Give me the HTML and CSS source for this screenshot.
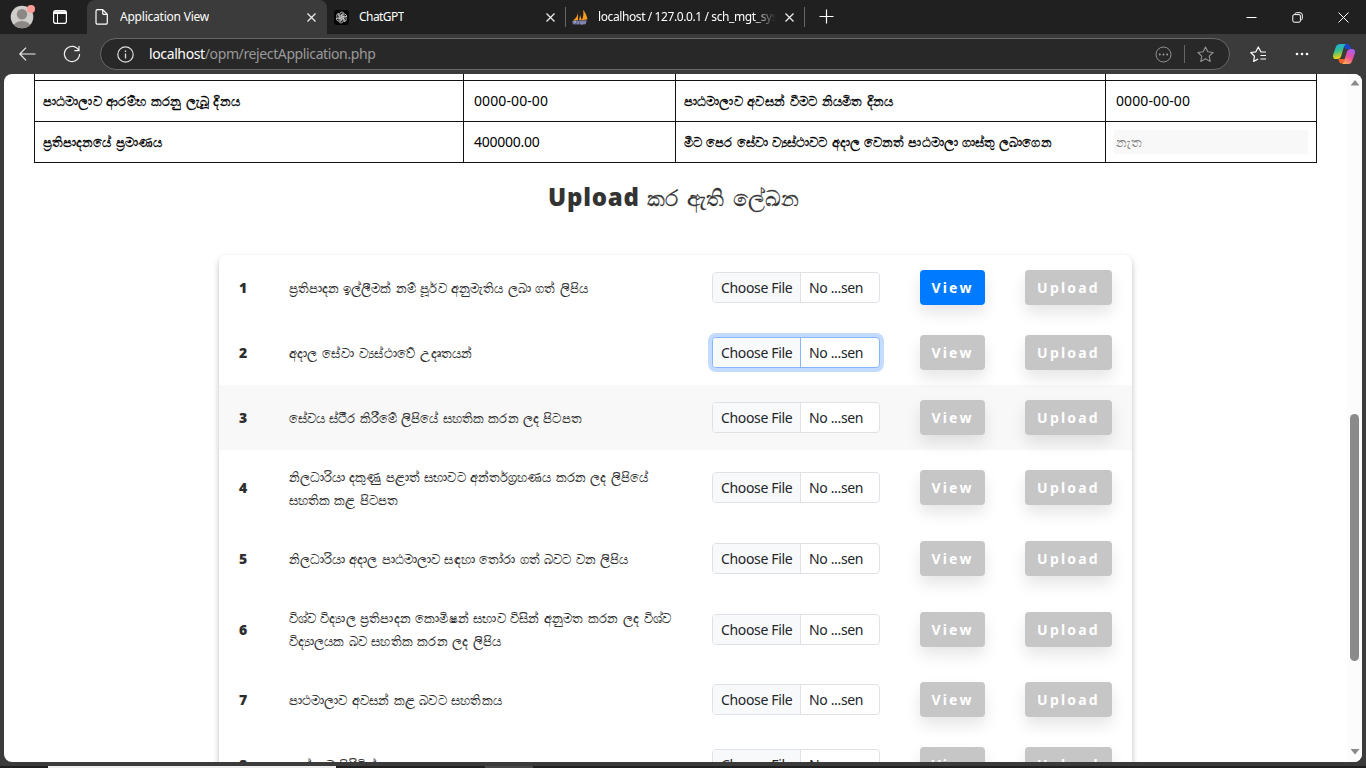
FILE: index.html
```html
<!DOCTYPE html>
<html lang="si">
<head>
<meta charset="utf-8">
<title>Application View</title>
<link rel="stylesheet" href="styles.css">
</head>
<body>
<div class="browser">
  <header class="tabs">
    <div class="profile">
      <svg width="26" height="26" viewBox="0 0 26 26"><defs><clipPath id="face"><circle cx="12" cy="14" r="11.3"/></clipPath></defs><circle cx="12" cy="14" r="11.3" fill="#cfcdca"/><g clip-path="url(#face)" fill="#8b8886"><circle cx="12" cy="11.3" r="5.2"/><ellipse cx="12" cy="24" rx="8.7" ry="6"/></g><circle cx="21" cy="6" r="4" fill="#ff9d98"/></svg>
      <svg width="14" height="14" viewBox="0 0 14 14" fill="none" stroke="#fff"><rect x=".6" y=".6" width="12.8" height="12.8" rx="2.2" stroke-width="1.2"/><path d="M1 2h12M1 3.2h12" stroke-width="1.6"/><path d="M4.5 4v9.5"/></svg>
    </div>
    <div class="tab active">
      <svg class="page-icon" width="14" height="16" viewBox="0 0 14 16" fill="none" stroke="#fff" stroke-width="1.2"><path d="M2.5.7h5.2l4.6 4.6v8.4a1.5 1.5 0 0 1-1.5 1.5H2.500A1.500 1.500 0 0 1 1 13.700V2.200A1.500 1.500 0 0 1 2.500.7zM7.700.9v3.300a1.200 1.200 0 0 0 1.200 1.200h3.300"/></svg>
      <span class="tab-title t1">Application View</span>
      <svg class="close" width="9" height="9" viewBox="0 0 9 9"><path d="M.5.5l8 8M8.500.5l-8 8"/></svg>
    </div>
    <div class="tab second">
      <svg width="15" height="15" viewBox="0 0 15 15"><rect width="15" height="15" rx="3" fill="#050505"/><g fill="none" stroke="#d8d8d8" stroke-width=".8" transform="translate(7.500 7.500)"><path id="petal" d="M-1.900 1.100V-3.100a2.300 2.300 0 0 1 4.100-1.400L-.3-3v3.100"/><use href="#petal" transform="rotate(60)"/><use href="#petal" transform="rotate(120)"/><use href="#petal" transform="rotate(180)"/><use href="#petal" transform="rotate(240)"/><use href="#petal" transform="rotate(300)"/></g></svg>
      <span class="tab-title t2">ChatGPT</span>
      <svg class="close" width="9" height="9" viewBox="0 0 9 9"><path d="M.5.5l8 8M8.500.5l-8 8"/></svg>
    </div>
    <div class="tab third">
      <svg width="17" height="16" viewBox="0 0 17 16"><path d="M6 .5C6.500 5 5 8.500 1 11.500h5zM6.800 2c1.500 3 1.500 6 0 9.200h3zM11 .8c2.500 3 4 6.500 4.500 9.500L9.500 11.500c2-3 2.300-7 1.500-10.700z" fill="#f89c1c"/><path d="M0 12l15-1-1.500 4.500H1z" fill="#62658f"/><path d="M2 15v-3h1.500v2M6 15v-3M9 12v3h2v-3M13 12v3" stroke="#b5b7d8" stroke-width=".7" fill="none"/></svg>
      <span class="tab-title t3">localhost / 127.0.0.1 / sch_mgt_sys</span>
      <svg class="close" width="9" height="9" viewBox="0 0 9 9"><path d="M.5.5l8 8M8.500.5l-8 8"/></svg>
    </div>
    <svg class="new-tab" width="15" height="15" viewBox="0 0 15 15" stroke="#fff" stroke-width="1.200"><path d="M7.500.5v14M.5 7.500h14"/></svg>
    <div class="window-controls">
      <svg width="11" height="11" viewBox="0 0 11 11"><path d="M.5 5.500h10"/></svg>
      <svg width="11" height="11" viewBox="0 0 11 11"><rect x=".8" y="2.600" width="7.600" height="7.600" rx="1.400"/><path d="M3 1.800Q3.200.7 4.500.7H8Q10.300.7 10.300 3v3.500Q10.300 7.800 9.200 8"/></svg>
      <svg width="11" height="11" viewBox="0 0 11 11"><path d="M.5.5l10 10M10.500.5l-10 10"/></svg>
    </div>
  </header>
  <div class="toolbar">
    <svg class="back" width="17" height="14" viewBox="0 0 17 14"><path d="M16.500 7H1M7 .7L.8 7 7 13.300"/></svg>
    <svg class="reload" width="18" height="18" viewBox="0 0 18 18"><path d="M15.800 5.500A7.600 7.600 0 1 0 16.600 9M16 1v4.700h-4.700"/></svg>
    <div class="address">
      <svg width="17" height="17" viewBox="0 0 17 17"><circle cx="8.500" cy="8.500" r="7.700" fill="none" stroke="#ddd" stroke-width="1.200"/><path d="M8.500 7.500v5M8.500 4.500v1.400" stroke="#ddd" stroke-width="1.300"/></svg>
      <span class="url"><b>localhost</b>/opm/rejectApplication.php</span>
      <svg class="more" width="17" height="17" viewBox="0 0 17 17"><circle cx="8.500" cy="8.500" r="7.500" fill="none" stroke="#929292"/><g fill="#a5a5a5"><circle cx="4.800" cy="8.500" r=".9"/><circle cx="8.500" cy="8.500" r=".9"/><circle cx="12.200" cy="8.500" r=".9"/></g></svg>
      <i></i>
      <svg width="17" height="17" viewBox="0 0 17 17"><path d="M8.500 1l2.300 4.800 5.300.7-3.900 3.700 1 5.200-4.700-2.600-4.700 2.600 1-5.200L.9 6.500l5.300-.7z" fill="none" stroke="#929292" stroke-width="1.100" stroke-linejoin="round"/></svg>
    </div>
    <svg class="fav" width="17" height="17" viewBox="0 0 17 17" fill="none" stroke="#fff" stroke-width="1.200" stroke-linejoin="round"><path d="M16 6h-5L8.300 1 5.900 5.800.7 6.500l3.800 3.700-.9 5.200 4.500-2.400M10.500 9.500H16M10.500 13H16"/></svg>
    <svg class="dots" width="14" height="4" viewBox="0 0 14 4" fill="#fff"><circle cx="2" cy="2" r="1.300"/><circle cx="7" cy="2" r="1.300"/><circle cx="12" cy="2" r="1.300"/></svg>
    <svg class="copilot" width="22" height="20" viewBox="0 0 22 20"><defs><linearGradient id="ca" x2=".2" y2="1"><stop stop-color="#1ba8ee"/><stop offset=".5" stop-color="#35c18c"/><stop offset="1" stop-color="#f5cf0b"/></linearGradient><linearGradient id="cb" x1=".7" x2=".2" y2="1"><stop stop-color="#a85cf8"/><stop offset=".5" stop-color="#ee4f98"/><stop offset="1" stop-color="#ffae55"/></linearGradient></defs><path d="M10 0h4.500q2 0 2.700 2.500l.8 2.500h-5L9 1z" fill="#1847c9"/><path d="M5.500 15H12l-1 4.500H8.500q-2 0-2.500-2z" fill="#f0642c"/><path d="M6.500 0H13q-1.500.8-2 2.500L8 12.500Q7 15 4.500 15H3Q-.8 15 .2 10.500L3 2.500Q4 0 6.500 0z" fill="url(#ca)"/><path d="M15.500 20H9q1.500-.8 2-2.500L14 7.500Q15 5 17.500 5H19q3.800 0 2.800 4.500L19 17.500Q18 20 15.500 20z" fill="url(#cb)"/></svg>
  </div>
  <div class="viewport">
    <main class="content">
      <table class="details">
        <tr class="cut"><td></td><td></td><td></td><td></td></tr>
        <tr><th class="wide"><span>පාඨමාලාව ආරම්භ කරනු ලැබූ දිනය</span></th><td class="date">0000-00-00</td><th class="wide"><span>පාඨමාලාව අවසන් වීමට නියමිත දිනය</span></th><td class="date">0000-00-00</td></tr>
        <tr><th><span>ප්‍රතිපාදනයේ ප්‍රමාණය</span></th><td>400000.00</td><th><span>මීට පෙර සේවා ව්‍යස්ථාවට <span class="plain">අදාල</span> වෙනත් පාඨමාලා ගාස්තු ලබාගෙන</span></th><td class="field"><div>නැත</div></td></tr>
      </table>
      <h2><b>Upload</b> <span>කර ඇති ලේඛන</span></h2>
      <section class="uploads">
        <div class="row"><b>1</b><p><span>ප්‍රතිපාදන ඉල්ලීමක් නම් පූර්&zwnj;ව අනුමැතිය ලබා ගත් ලිපිය</span></p><div class="file"><span>Choose File</span><span>No ...sen</span></div><button class="view on">View</button><button class="up">Upload</button></div>
        <div class="row"><b>2</b><p class="wider"><span><span class="plain">අදාල</span> සේවා ව්‍යස්ථාවේ <span class="plain">උදෘතයන්</span></span></p><div class="file focus"><span>Choose File</span><span>No ...sen</span></div><button class="view">View</button><button class="up">Upload</button></div>
        <div class="row hover"><b>3</b><p><span>සේවය ස්ථීර කිරීමේ ලිපියේ සහතික කරන ලද පිටපත</span></p><div class="file"><span>Choose File</span><span>No ...sen</span></div><button class="view">View</button><button class="up">Upload</button></div>
        <div class="row tall"><b>4</b><p><span>නිලධාරියා දකුණු පළාත් සභාවට අන්තර්&zwnj;ග්‍රහණය කරන ලද ලිපියේ</span><br><span>සහතික කළ පිටපත</span></p><div class="file"><span>Choose File</span><span>No ...sen</span></div><button class="view">View</button><button class="up">Upload</button></div>
        <div class="row mid"><b>5</b><p><span>නිලධාරියා <span class="plain">අදාල</span> පාඨමාලාව සඳහා තෝරා ගත් බවට වන ලිපිය</span></p><div class="file"><span>Choose File</span><span>No ...sen</span></div><button class="view">View</button><button class="up">Upload</button></div>
        <div class="row tall six"><b>6</b><p class="wide"><span>විශ්ව විද්‍යාල ප්‍රතිපාදන කොමිෂන් සභාව විසින් අනුමත කරන ලද විශ්ව</span><br><span>විද්‍යාලයක බව සහතික කරන ලද ලිපිය</span></p><div class="file"><span>Choose File</span><span>No ...sen</span></div><button class="view">View</button><button class="up">Upload</button></div>
        <div class="row"><b>7</b><p class="wide"><span>පාථමාලාව අවසන් කළ බවට සහතිකය</span></p><div class="file"><span>Choose File</span><span>No ...sen</span></div><button class="view">View</button><button class="up">Upload</button></div>
        <div class="row last"><b>8</b><p><span>ගාස්තු ව පිරිවිත්</span></p><div class="file"><span>Choose File</span><span>No ...sen</span></div><button class="view">View</button><button class="up">Upload</button></div>
      </section>
    </main>
    <div class="scrollbar">
      <svg width="10" height="6" viewBox="0 0 10 6"><path d="M5 0l4.500 5.500h-9z" fill="#8a8a8a"/></svg>
      <i></i>
      <svg width="10" height="6" viewBox="0 0 10 6"><path d="M5 5.500L.5 0h9z" fill="#8a8a8a"/></svg>
    </div>
  </div>
  <footer><i class="f1"></i><i class="f2"></i><i class="f3"></i><i class="f4"></i></footer>
</div>
</body>
</html>
```
FILE: styles.css
```css
* { box-sizing: border-box; }
body { margin: 0; font-family: "Noto Sans", "Open Sans", sans-serif; overflow: hidden; }
svg { display: block; flex: none; }
.browser { width: 1366px; height: 768px; background: #3b3b3b; display: flex; flex-direction: column; overflow: hidden; }
.tabs { height: 34px; flex: none; display: flex; background: #202020; color: #fff; }
.profile { width: 87px; display: flex; gap: 17px; padding: 3px 0 0 10px; background: #202020; }
.profile svg + svg { margin-top: 7px; }
.tab { display: flex; align-items: center; height: 34px; }
.tab-title { font-size: 12px; line-height: 16px; white-space: nowrap; overflow: hidden; }
.tab .close { margin-left: auto; }
.close path { stroke: #eee; stroke-width: 1.200; }
.active { width: 240px; background: #3b3b3b; border-radius: 8px 8px 0 0; padding: 0 11px 0 8px; }
.active .tab-title { margin-left: 11px; }
.second { width: 239px; padding: 0 10px 0 7px; border-right: 1px solid #666; height: 20px; margin-top: 7px; }
.second .tab-title { margin-left: 10px; }
.third { width: 239px; padding: 0 10px 0 6px; border-right: 1px solid #666; height: 20px; margin-top: 7px; }
.third .tab-title { margin-left: 9px; width: 179px; -webkit-mask-image: linear-gradient(90deg, #000 155px, transparent 178px); }
.t1 { letter-spacing: -.22px; }
.t2 { letter-spacing: -.55px; }
.t3 { font-size: 12px; letter-spacing: -.4px; }
.new-tab { margin: 9px 0 0 14px; }
.window-controls { margin: 12px 17px 0 auto; display: flex; gap: 35px; }
.window-controls svg { fill: none; stroke: #fff; stroke-width: 1; }
.toolbar { height: 40px; flex: none; display: flex; align-items: center; padding: 0 11px 0 19px; }
.back, .reload { fill: none; stroke: #eee; stroke-width: 1.200; }
.reload { margin-left: 27px; }
.address { width: 1130px; height: 32px; margin-left: 19px; border: 1px solid #686868; border-radius: 16px; background: #282828; display: flex; align-items: center; padding: 0 15px 0 16px; }
.url { margin-left: 15px; font-size: 14px; line-height: 20px; color: #999; letter-spacing: -.38px; white-space: nowrap; }
.url b { color: #fff; font-weight: 400; }
.more { margin-left: auto; }
.address i { width: 1px; height: 18px; background: #666; margin: 0 12px; }
.fav { margin-left: 20px; }
.dots { margin-left: 28px; }
.copilot { margin-left: auto; }
.viewport { width: 1358px; height: 688px; margin-left: 4px; background: #fff; border-radius: 8px; overflow: hidden; display: flex; flex: none; }
.content { width: 1343px; flex: none; display: flex; flex-direction: column; align-items: flex-start; }
.details { margin-left: 30px; width: 1283px; table-layout: fixed; border-collapse: collapse; color: #000; font-size: 14px; border: 1px solid #111; border-top: 0; flex: none; }
.details td, .details th { border: 1px solid #111; padding: 0 10px; height: 41px; line-height: 24px; text-align: left; white-space: nowrap; letter-spacing: -.25px; }
.details th { padding: 0 8px; font-size: 13px; letter-spacing: .06px; word-spacing: .8px; font-weight: 500; -webkit-text-stroke: .3px #000; }
.details th.wide { letter-spacing: .16px; word-spacing: 1px; }
.details .date { letter-spacing: .1px; }
.details .cut td { height: 6px; border-top: 0; padding: 0; line-height: 0; }
.cut td:nth-child(1) { width: 429px; }
.cut td:nth-child(2) { width: 212px; }
.cut td:nth-child(3) { width: 430px; }
.details .field { padding: 0 8px; font-size: 13px; }
.field div { background: #f8f8f8; color: #808080; padding-left: 2px; }
.plain { font-feature-settings: "psts" 0, "pres" 0, "blws" 0; }
h2 { margin: 16px 0 0; width: 1343px; height: 36px; padding-left: 544px; font-size: 24px; line-height: 35px; font-weight: 400; color: #333; white-space: nowrap; }
h2 b { font-family: "Open Sans", sans-serif; font-size: 24px; font-weight: 800; letter-spacing: .8px; }
h2 span { font-size: 22px; margin-left: 1px; letter-spacing: .1px; word-spacing: 3px; -webkit-text-stroke: .3px #333; }
.uploads { margin: 40px 0 0 215px; width: 913px; border-radius: 8px; box-shadow: 0 3px 6px rgba(0,0,0,.25); color: #2d2d2d; overflow: hidden; flex: none; }
.row { height: 65px; display: flex; align-items: center; padding-left: 20px; }
.row.mid { height: 66px; }
.row.tall { height: 76px; }
.row.six { height: 75px; }
.hover { background: #f8f8f8; }
.row > b { width: 49px; font-family: "Open Sans", sans-serif; font-size: 14px; font-weight: 800; }
.row p { width: 424px; margin: 0; padding: 2px 0 0 .5px; font-size: 13px; line-height: 23px; letter-spacing: .07px; word-spacing: .9px; white-space: nowrap; -webkit-text-stroke: .15px #2d2d2d; }
.row p.wide { letter-spacing: .12px; word-spacing: 1px; }
.row p.wider { letter-spacing: .15px; word-spacing: 2px; }
.file { width: 168px; height: 31px; display: flex; border: 1px solid #dee2e6; border-radius: 4px; font-size: 14px; line-height: 29px; letter-spacing: -.35px; color: #212529; background: #fff; white-space: nowrap; }
.file span:first-child { width: 88px; padding-left: 8px; background: #f8f9fa; border-right: 1px solid #dee2e6; border-radius: 3px 0 0 3px; }
.file span:last-child { padding-left: 8px; }
.focus, .file.focus span:first-child { border-color: #86b7fe; }
.focus { box-shadow: 0 0 0 4px #c2dbfe; }
button { height: 35px; padding: 0; border: 0; border-radius: 4px; background: #c6c6c6; color: #fff; font: 700 14px "Noto Sans", sans-serif; letter-spacing: 2.200px; box-shadow: 0 8px 15px rgba(0,0,0,.1); }
.view { width: 65px; margin-left: 40px; }
.up { width: 87px; margin-left: 40px; }
.on { background: #007bff; }
.scrollbar { width: 15px; background: #fcfcfc; display: flex; flex-direction: column; align-items: center; padding: 6px 0 7px; }
.scrollbar i { width: 9px; height: 247px; margin: 328px 0 auto; border-radius: 5px; background: #8a8a8a; }
footer { margin-top: 4px; height: 2px; background: #202020; display: flex; }
.f1 { width: 48px; }
.f2 { width: 288px; background: #eee; }
.f3 { width: 149px; }
.f4 { width: 48px; background: #484848; }
```
